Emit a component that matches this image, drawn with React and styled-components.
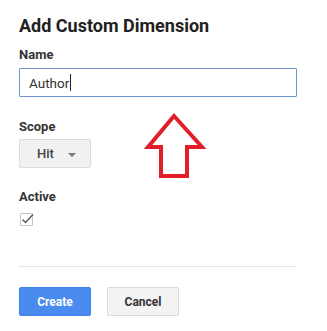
import React from 'react';
import styled, { createGlobalStyle } from 'styled-components';

const GlobalStyle = createGlobalStyle`
  html, body {
    margin: 0;
    padding: 0;
    background: #fff;
  }
  body {
    font-family: Roboto, "Liberation Sans", Arial, sans-serif;
    color: #222;
  }
`;

const Page = styled.div`
  position: relative;
  width: 327px;
  height: 331px;
  overflow: hidden;
  padding: 14px 30px 0 19px;
  box-sizing: border-box;
`;

const Title = styled.h1`
  margin: 0;
  font-size: 18px;
  line-height: 24px;
  font-weight: 700;
  color: #212121;
`;

const Field = styled.div`
  display: flex;
  flex-direction: column;
  align-items: flex-start;
  margin-top: ${(p) => p.$top}px;
`;

const Label = styled.label`
  font-size: 13px;
  line-height: 16px;
  font-weight: 700;
  color: #333;
  margin-bottom: ${(p) => p.$gap}px;
`;

const TextInput = styled.div`
  box-sizing: border-box;
  width: 278px;
  height: 29px;
  border: 1px solid #6f96d1;
  border-radius: 1px;
  display: flex;
  align-items: center;
  padding-left: 9px;
  font-size: 13.5px;
  color: #333;
`;

const Caret = styled.span`
  display: inline-block;
  width: 1px;
  height: 17px;
  background: #222;
  margin-left: 1px;
`;

const Dropdown = styled.div`
  box-sizing: border-box;
  width: 72px;
  height: 29px;
  background: #f1f1f1;
  border: 1px solid #dcdcdc;
  border-radius: 2px;
  display: flex;
  align-items: center;
  padding-left: 17px;
  gap: 14px;
  font-size: 13px;
  font-weight: 500;
  color: #444;
`;

const DownCaret = styled.span`
  width: 0;
  height: 0;
  border-left: 4px solid transparent;
  border-right: 4px solid transparent;
  border-top: 4px solid #777;
  margin-top: 2px;
`;

const Checkbox = styled.div`
  position: relative;
  box-sizing: border-box;
  width: 13px;
  height: 13px;
  border: 1px solid #c6c6c6;
  border-radius: 1px;
  margin-left: 1px;
`;

const Check = styled.svg`
  position: absolute;
  left: 0;
  top: -1px;
`;

const Divider = styled.hr`
  margin: 40px 0 0 -1px;
  border: 0;
  border-top: 1px solid #e5e5e5;
  width: 279px;
`;

const Actions = styled.div`
  display: flex;
  gap: 16px;
  margin-top: 20px;
`;

const Button = styled.button`
  box-sizing: border-box;
  width: 72px;
  height: 29px;
  border-radius: 2px;
  font-family: Roboto, "Liberation Sans", Arial, sans-serif;
  font-size: 12px;
  font-weight: 700;
  cursor: pointer;
  border: 1px solid ${(p) => (p.$primary ? '#3f83ea' : '#dadada')};
  background: ${(p) => (p.$primary ? '#4a8bf0' : '#f3f3f3')};
  color: ${(p) => (p.$primary ? '#fff' : '#333')};
`;

const Annotation = styled.svg`
  position: absolute;
  left: 0;
  top: 0;
  pointer-events: none;
`;

export default function App() {
  return (
    <>
      <GlobalStyle />
      <Page>
        <Title>Add Custom Dimension</Title>

        <Field $top={9}>
          <Label $gap={5}>Name</Label>
          <TextInput>
            Author<Caret />
          </TextInput>
        </Field>

        <Field $top={22}>
          <Label $gap={4}>Scope</Label>
          <Dropdown>
            Hit
            <DownCaret />
          </Dropdown>
        </Field>

        <Field $top={21}>
          <Label $gap={8}>Active</Label>
          <Checkbox>
            <Check width="13" height="12" viewBox="0 0 13 12">
              <path d="M1.5 6.5 L4.5 9.5 L12 1.5" fill="none" stroke="#5a5a5a" strokeWidth="1.5" />
            </Check>
          </Checkbox>
        </Field>

        <Divider />

        <Actions>
          <Button $primary>Create</Button>
          <Button>Cancel</Button>
        </Actions>

        <Annotation width="327" height="331" viewBox="0 0 327 331">
          <polygon
            points="174,116 202,147 187,147 187,176 161,176 161,147 148,147"
            fill="none"
            stroke="#e01f28"
            strokeWidth="4"
            strokeLinejoin="miter"
          />
        </Annotation>
      </Page>
    </>
  );
}
